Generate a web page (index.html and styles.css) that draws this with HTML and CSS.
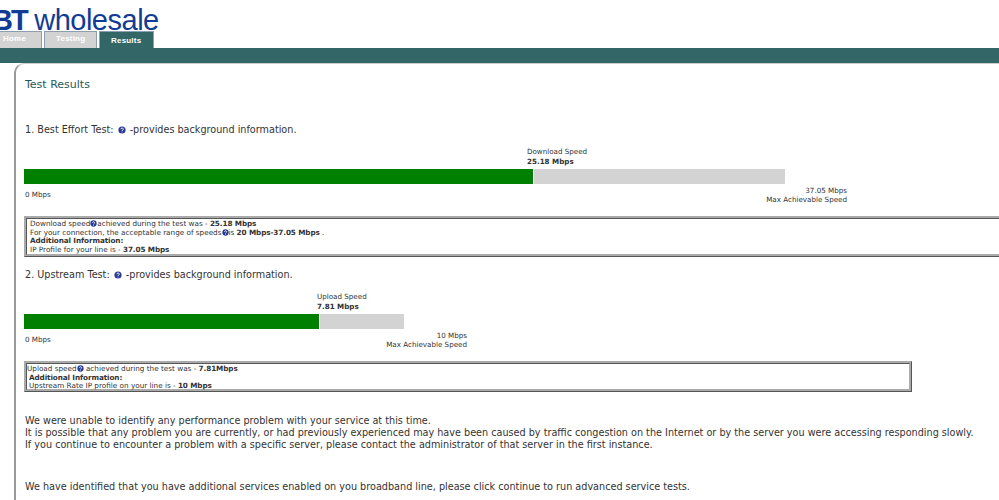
FILE: index.html
```html
<!DOCTYPE html>
<html lang="en">
<head>
  <meta charset="UTF-8" />
  <title>BT wholesale - Test Results</title>
  <link rel="stylesheet" href="styles.css">
</head>
<body>

  <div class="logo"><b>BT</b> wholesale</div>

  <div class="tabs">
    <a class="tab" href="#">Home</a>
    <a class="tab" href="#">Testing</a>
    <a class="tab active" href="#">Results</a>
  </div>
  <div class="band"></div>

  <div class="content">
    <h2>Test Results</h2>

    <p class="test-title">1. Best Effort Test: <svg class="help big" viewBox="0 0 10 10"><circle cx="5" cy="5" r="4.5"/><path d="M3.6 4a1.5 1.4 0 1 1 2.2 1.2Q5 5.6 5 6.3M5 7.2v.8"/></svg> -provides background information.</p>

    <div class="meter meter-down">
      <div class="now">Download Speed<br><b>25.18 Mbps</b></div>
      <div class="track">
        <div class="fill"></div>
        <div class="rest"></div>
      </div>
      <div class="scale">
        <span class="min">0 Mbps</span>
        <span class="max">37.05 Mbps<br>Max Achievable Speed</span>
      </div>
    </div>

    <div class="info info-down">
      <div>Download speed<svg class="help" viewBox="0 0 10 10"><circle cx="5" cy="5" r="4.5"/><path d="M3.6 4a1.5 1.4 0 1 1 2.2 1.2Q5 5.6 5 6.3M5 7.2v.8"/></svg>achieved during the test was - <b>25.18 Mbps</b></div>
      <div>For your connection, the acceptable range of speeds<svg class="help" viewBox="0 0 10 10"><circle cx="5" cy="5" r="4.5"/><path d="M3.6 4a1.5 1.4 0 1 1 2.2 1.2Q5 5.6 5 6.3M5 7.2v.8"/></svg>is <b>20 Mbps-37.05 Mbps</b> .</div>
      <div><b>Additional Information:</b></div>
      <div>IP Profile for your line is - <b>37.05 Mbps</b></div>
    </div>

    <p class="test-title second">2. Upstream Test: <svg class="help big" viewBox="0 0 10 10"><circle cx="5" cy="5" r="4.5"/><path d="M3.6 4a1.5 1.4 0 1 1 2.2 1.2Q5 5.6 5 6.3M5 7.2v.8"/></svg> -provides background information.</p>

    <div class="meter meter-up">
      <div class="now">Upload Speed<br><b>7.81 Mbps</b></div>
      <div class="track">
        <div class="fill"></div>
        <div class="rest"></div>
      </div>
      <div class="scale">
        <span class="min">0 Mbps</span>
        <span class="max">10 Mbps<br>Max Achievable Speed</span>
      </div>
    </div>

    <div class="info info-up">
      <div>Upload speed<svg class="help" viewBox="0 0 10 10"><circle cx="5" cy="5" r="4.5"/><path d="M3.6 4a1.5 1.4 0 1 1 2.2 1.2Q5 5.6 5 6.3M5 7.2v.8"/></svg> achieved during the test was - <b>7.81Mbps</b></div>
      <div class="indent"><b>Additional Information:</b></div>
      <div class="indent">Upstream Rate IP profile on your line is - <b>10 Mbps</b></div>
    </div>

    <p class="summary">We were unable to identify any performance problem with your service at this time.<br>
    It is possible that any problem you are currently, or had previously experienced may have been caused by traffic congestion on the Internet or by the server you were accessing responding slowly.<br>
    If you continue to encounter a problem with a specific server, please contact the administrator of that server in the first instance.</p>

    <p class="summary next">We have identified that you have additional services enabled on you broadband line, please click continue to run advanced service tests.</p>
  </div>

</body>
</html>
```

FILE: styles.css
```css
* {
  margin: 0;
  padding: 0;
  box-sizing: border-box;
}

html, body {
  height: 500px;
  overflow: hidden;
}

body {
  background: white;
  color: #333;
  font-family: 'DejaVu Sans', Verdana, sans-serif;
}

.logo {
  height: 31px;
  margin-left: -8px;
  padding-top: 9px;
  font-family: 'Liberation Sans', Arial, sans-serif;
  font-size: 29px;
  line-height: 22px;
  letter-spacing: -0.5px;
  color: #123c93;
  white-space: nowrap;
}

.logo b {
  letter-spacing: -2px;
}

.tabs {
  display: flex;
  gap: 2px;
  height: 17px;
  margin-left: -2px;
}

.tab {
  width: 44px;
  padding-top: 2px;
  padding-left: 4px;
  background: #d3d3d3;
  border: 1px solid #8c9fb0;
  border-bottom: none;
  color: white;
  font-family: 'Liberation Sans', Arial, sans-serif;
  font-size: 8px;
  font-weight: bold;
  letter-spacing: 0.2px;
  text-decoration: none;
}

.tab:nth-child(2) {
  width: 53px;
  padding-left: 11px;
}

.tab.active {
  width: 55px;
  padding-top: 4px;
  padding-left: 11px;
  background: #336666;
}

.band {
  height: 15px;
  background: #336666;
}

.content {
  margin-left: 14px;
  padding: 14px 0 0 9px;
  height: 437px;
  border-left: 2px solid #999;
  border-top: 1px solid #ccc;
  border-top-left-radius: 10px;
}

h2 {
  font-size: 11px;
  font-weight: normal;
  line-height: 14px;
  color: #1f5a5a;
}

.test-title {
  margin-top: 31px;
  font-size: 9.67px;
  line-height: 14px;
}

.test-title.second {
  margin-top: 11px;
}

.help {
  width: 8px;
  height: 8px;
  vertical-align: -1px;
  fill: #2a3a94;
  stroke: white;
  stroke-width: 1.2;
}

.help circle {
  stroke: none;
}

.help path {
  fill: none;
}

.help.big {
  margin: 0 1px;
}

.meter {
  margin-left: -1px;
  font-size: 7.15px;
  line-height: 10px;
}

.meter-down {
  width: 823px;
  margin-top: 9px;
}

.meter-up {
  width: 443px;
  margin-top: 9px;
}

.now {
  height: 23px;
  padding-top: 1px;
}

.meter-down .now {
  margin-left: 503px;
}

.meter-up .now {
  margin-left: 293px;
}

.track {
  display: flex;
  gap: 1px;
  height: 15px;
}

.fill {
  background: green;
}

.rest {
  background: #d3d3d3;
}

.meter-down .fill {
  width: 509px;
}

.meter-down .rest {
  width: 251px;
}

.meter-up .fill {
  width: 295px;
}

.meter-up .rest {
  width: 84px;
}

.scale {
  display: flex;
  justify-content: space-between;
  height: 32px;
  padding-top: 3px;
  line-height: 8.5px;
}

.min {
  margin-top: 4px;
  margin-left: 1px;
}

.max {
  text-align: right;
}

.info {
  margin-left: -1px;
  padding: 1px 3px 0;
  border: 3px ridge #aaa;
  font-size: 7.25px;
  line-height: 8.5px;
  white-space: nowrap;
}

.info b {
  letter-spacing: -0.1px;
}

.info-down {
  width: 1000px;
  height: 41px;
}

.info-up {
  width: 888px;
  height: 31px;
  padding-left: 0;
}

.indent {
  padding-left: 2px;
}

.info .help {
  width: 7px;
  height: 7px;
}

.summary {
  margin-top: 23px;
  font-size: 9.67px;
  line-height: 12px;
  white-space: nowrap;
}

.summary.next {
  margin-top: 30px;
}
```
